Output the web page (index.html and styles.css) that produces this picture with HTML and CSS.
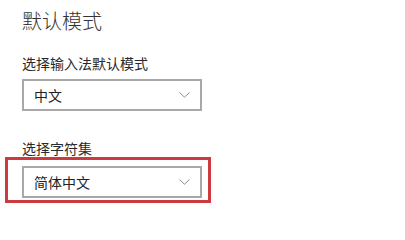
FILE: index.html
```html
<!DOCTYPE html>
<html lang="zh-CN">
<head>
<meta charset="utf-8">
<title>默认模式</title>
<link rel="stylesheet" href="styles.css">
</head>
<body>
<main class="page">
  <h1 class="title">默认模式</h1>
  <div class="field">
    <div class="label">选择输入法默认模式</div>
    <div class="select">
      <span class="value">中文</span>
      <svg class="chevron" width="11" height="6" viewBox="0 0 11 6"><path d="M0.5 0.5 L5.5 5.2 L10.5 0.5" fill="none" stroke="#8c8c8c" stroke-width="1"/></svg>
    </div>
  </div>
  <div class="field field-second">
    <div class="label">选择字符集</div>
    <div class="select highlighted">
      <span class="value">简体中文</span>
      <svg class="chevron" width="11" height="6" viewBox="0 0 11 6"><path d="M0.5 0.5 L5.5 5.2 L10.5 0.5" fill="none" stroke="#8c8c8c" stroke-width="1"/></svg>
      <span class="mark"></span>
    </div>
  </div>
</main>
</body>
</html>
```

FILE: styles.css
```css
html, body {
  margin: 0;
  padding: 0;
  background: #ffffff;
  min-height: 100%;
}

.page {
  padding: 11px 0 23px 22px;
  font-family: "Noto Sans CJK SC", "Noto Sans", sans-serif;
  color: #2b2b2b;
}

.title {
  margin: 0;
  font-size: 20px;
  line-height: 20px;
  font-weight: 300;
  color: #333333;
}

.field {
  margin-top: 25px;
}

.field-second {
  margin-top: 30px;
}

.label {
  font-size: 14px;
  line-height: 14px;
  color: #2a2a2a;
}

.select {
  margin-top: 9px;
  width: 180px;
  height: 32px;
  box-sizing: border-box;
  border: 2px solid #a8a8a8;
  display: flex;
  align-items: center;
  justify-content: space-between;
  padding: 0 10px 0 10px;
  font-size: 14px;
  color: #222222;
}

.field-second .select {
  margin-top: 11px;
}

.value {
  line-height: 14px;
}

.chevron {
  display: block;
}

.highlighted {
  position: relative;
}

.mark {
  position: absolute;
  top: -11px;
  left: -19px;
  right: -11px;
  bottom: -7px;
  border: 3px solid #cc3a3f;
}
```
